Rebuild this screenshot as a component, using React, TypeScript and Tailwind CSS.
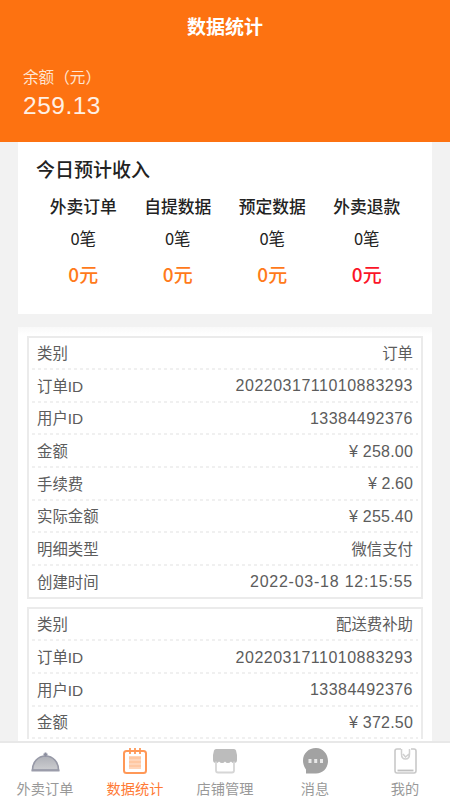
import type { ReactNode } from 'react';

type Row = { label: string; value: string; spacing?: string };

const sans = "font-['Liberation_Sans','Noto_Sans_CJK_SC',sans-serif]";
const cjk = "font-['Noto_Sans_CJK_SC',sans-serif]";

const stats = [
  { name: '外卖订单', color: 'text-[#ff7a1a]' },
  { name: '自提数据', color: 'text-[#ff7a1a]' },
  { name: '预定数据', color: 'text-[#ff7a1a]' },
  { name: '外卖退款', color: 'text-[#fb1428]' },
];

const orderRows: Row[] = [
  { label: '类别', value: '订单' },
  { label: '订单ID', value: '2022031711010883293', spacing: 'text-[16px] tracking-[0.5px]' },
  { label: '用户ID', value: '13384492376', spacing: 'text-[16px] tracking-[0.47px]' },
  { label: '金额', value: '¥ 258.00', spacing: 'text-[16px] tracking-[0.2px]' },
  { label: '手续费', value: '¥ 2.60', spacing: 'text-[16px] tracking-[0.1px]' },
  { label: '实际金额', value: '¥ 255.40', spacing: 'text-[16px] tracking-[0.2px]' },
  { label: '明细类型', value: '微信支付' },
  { label: '创建时间', value: '2022-03-18 12:15:55', spacing: 'text-[16px] tracking-[0.76px]' },
];

const subsidyRows: Row[] = [
  { label: '类别', value: '配送费补助' },
  { label: '订单ID', value: '2022031711010883293', spacing: 'text-[16px] tracking-[0.5px]' },
  { label: '用户ID', value: '13384492376', spacing: 'text-[16px] tracking-[0.47px]' },
  { label: '金额', value: '¥ 372.50', spacing: 'text-[16px] tracking-[0.2px]' },
];

function Divider() {
  return <div className="h-[2px] bg-[repeating-linear-gradient(90deg,#f0f0f0_0_3px,transparent_3px_6px)]" />;
}

function RecordCard({ rows, open }: { rows: Row[]; open?: boolean }) {
  return (
    <div className={`shrink-0 border-2 border-[#ebebeb] px-[3px] ${open ? 'border-b-0' : ''}`}>
      {rows.map((row, i) => (
        <div key={row.label}>
          {i > 0 && <Divider />}
          <div className="flex h-[30.65px] items-center justify-between px-[5px] pt-[2px] text-[15.4px] leading-none text-[#5c5c5c]">
            <span>{row.label}</span>
            <span className={row.spacing}>{row.value}</span>
          </div>
        </div>
      ))}
      {open && <Divider />}
    </div>
  );
}

function Tab({ label, active, children }: { label: string; active?: boolean; children: ReactNode }) {
  return (
    <div className="flex flex-1 flex-col items-center pt-[4px]">
      <svg width="32" height="30" viewBox="0 0 32 30" fill="none">
        {children}
      </svg>
      <span className={`mt-[4px] text-[14.2px] leading-[17px] whitespace-nowrap ${active ? 'text-[#ff7a35]' : 'text-[#999]'}`}>
        {label}
      </span>
    </div>
  );
}

export default function App() {
  return (
    <div className={`flex h-[800px] w-[450px] flex-col overflow-hidden bg-[#f2f2f2] ${sans}`}>
      <header className="h-[142px] shrink-0 bg-[#fd7211] text-white">
        <h1 className="pt-[15px] text-center text-[19px] leading-[26px] font-bold">数据统计</h1>
        <div className="pl-[23px]">
          <div className="mt-[26px] text-[15.6px] leading-[21px] text-[#ffe4d0]">余额（元）</div>
          <div className="mt-[4px] text-[24.5px] leading-[27px] tracking-[0.5px] text-[#fff0e5]">259.13</div>
        </div>
      </header>

      <main className="flex min-h-0 flex-1 flex-col overflow-hidden px-[18px]">
        <section className="h-[172px] shrink-0 bg-white pt-[17px]">
          <h2 className="pl-[18px] text-[19px] leading-[24px] font-medium text-[#222]">今日预计收入</h2>
          <div className={`mt-[12px] grid grid-cols-4 px-[18px] text-center text-[#222] ${cjk}`}>
            {stats.map((s) => (
              <div key={s.name}>
                <div className="text-[16.8px] leading-[22px] font-medium">{s.name}</div>
                <div className="mt-[10px] text-[16.5px] leading-[22px]">0笔</div>
                <div className={`mt-[13px] text-[19px] leading-[24px] font-medium ${s.color}`}>0元</div>
              </div>
            ))}
          </div>
        </section>

        <section className="mt-[13px] flex min-h-0 flex-1 flex-col gap-[8px] overflow-hidden bg-white bg-linear-to-b from-[#f9f9f9] from-0% to-white to-[8px] px-[9px] pt-[8.5px]">
          <RecordCard rows={orderRows} />
          <RecordCard rows={subsidyRows} open />
        </section>
      </main>

      <nav className="flex h-[59px] shrink-0 border-t-2 border-[#e8e8e8] bg-white">
        <Tab label="外卖订单">
          <defs>
            <linearGradient id="dome" x1="0" y1="0" x2="0" y2="1">
              <stop offset="0" stopColor="#aeb0b7" />
              <stop offset="1" stopColor="#cccdd0" />
            </linearGradient>
          </defs>
          <path d="M3.500 23C3.500 15 9 9 16.500 9S29.500 15 29.500 23Z" fill="url(#dome)" stroke="#9698a6" strokeWidth="1.6" />
          <path d="M16.500 5.500v4M14.500 7.500h4" stroke="#8b8e9e" strokeWidth="1.8" />
          <path d="M2.500 23.500h28" stroke="#9b9caa" strokeWidth="2" />
        </Tab>
        <Tab label="数据统计" active>
          <rect x="5" y="4" width="22" height="22" rx="2.5" stroke="#ff9857" strokeWidth="2" />
          <path d="M11 1v6M16 1v6M21 1v6" stroke="#ff9857" strokeWidth="1.8" />
          <path d="M10 9h12v13H10z" fill="#ffd5b9" />
          <path d="M10 11h12M10 15h12M10 19h12" stroke="#ffc39b" strokeWidth="1.6" />
        </Tab>
        <Tab label="店铺管理">
          <path d="M7 2h18q1.500 0 2 1.500L28 8v5q0 3-3 3-2 0-3-1.500Q20.500 16 19 16q-2 0-3-1.500Q15 16 13 16q-1.500 0-3-1.500Q9 16 7 16q-3 0-3-3V8L5 3.500Q5.500 2 7 2Z" fill="#bcbcbc" />
          <path d="M7 14.500v9q0 2 2 2h14q2 0 2-2v-9" stroke="#d6d6d6" strokeWidth="1.8" />
        </Tab>
        <Tab label="消息">
          <path d="M17 1C9.500 1 4 6.500 4 13.500c0 4 1.500 7 3 9v4h10c7 0 12-5.500 12-12.500S24 1 17 1Z" fill="#a2a2a2" />
          <path d="M9.500 12h3v4h-3zM15.200 12h3v4h-3zM21 12h3v4h-3z" fill="#e8e8e8" />
        </Tab>
        <Tab label="我的">
          <path d="M12 2H8Q6 2 6 4v19.500Q6 26 8 26h17q2 0 2-2.500V4q0-2-2-2h-3" stroke="#c9c9c9" strokeWidth="1.6" />
          <path d="M12.500 2v5q0 5 4 5t4-5V2M14 7l2.500 3L20 7" stroke="#d0d0d0" strokeWidth="1.5" />
          <path d="M8.500 23.500h16" stroke="#c0c0c0" strokeWidth="1.8" />
        </Tab>
      </nav>
    </div>
  );
}
